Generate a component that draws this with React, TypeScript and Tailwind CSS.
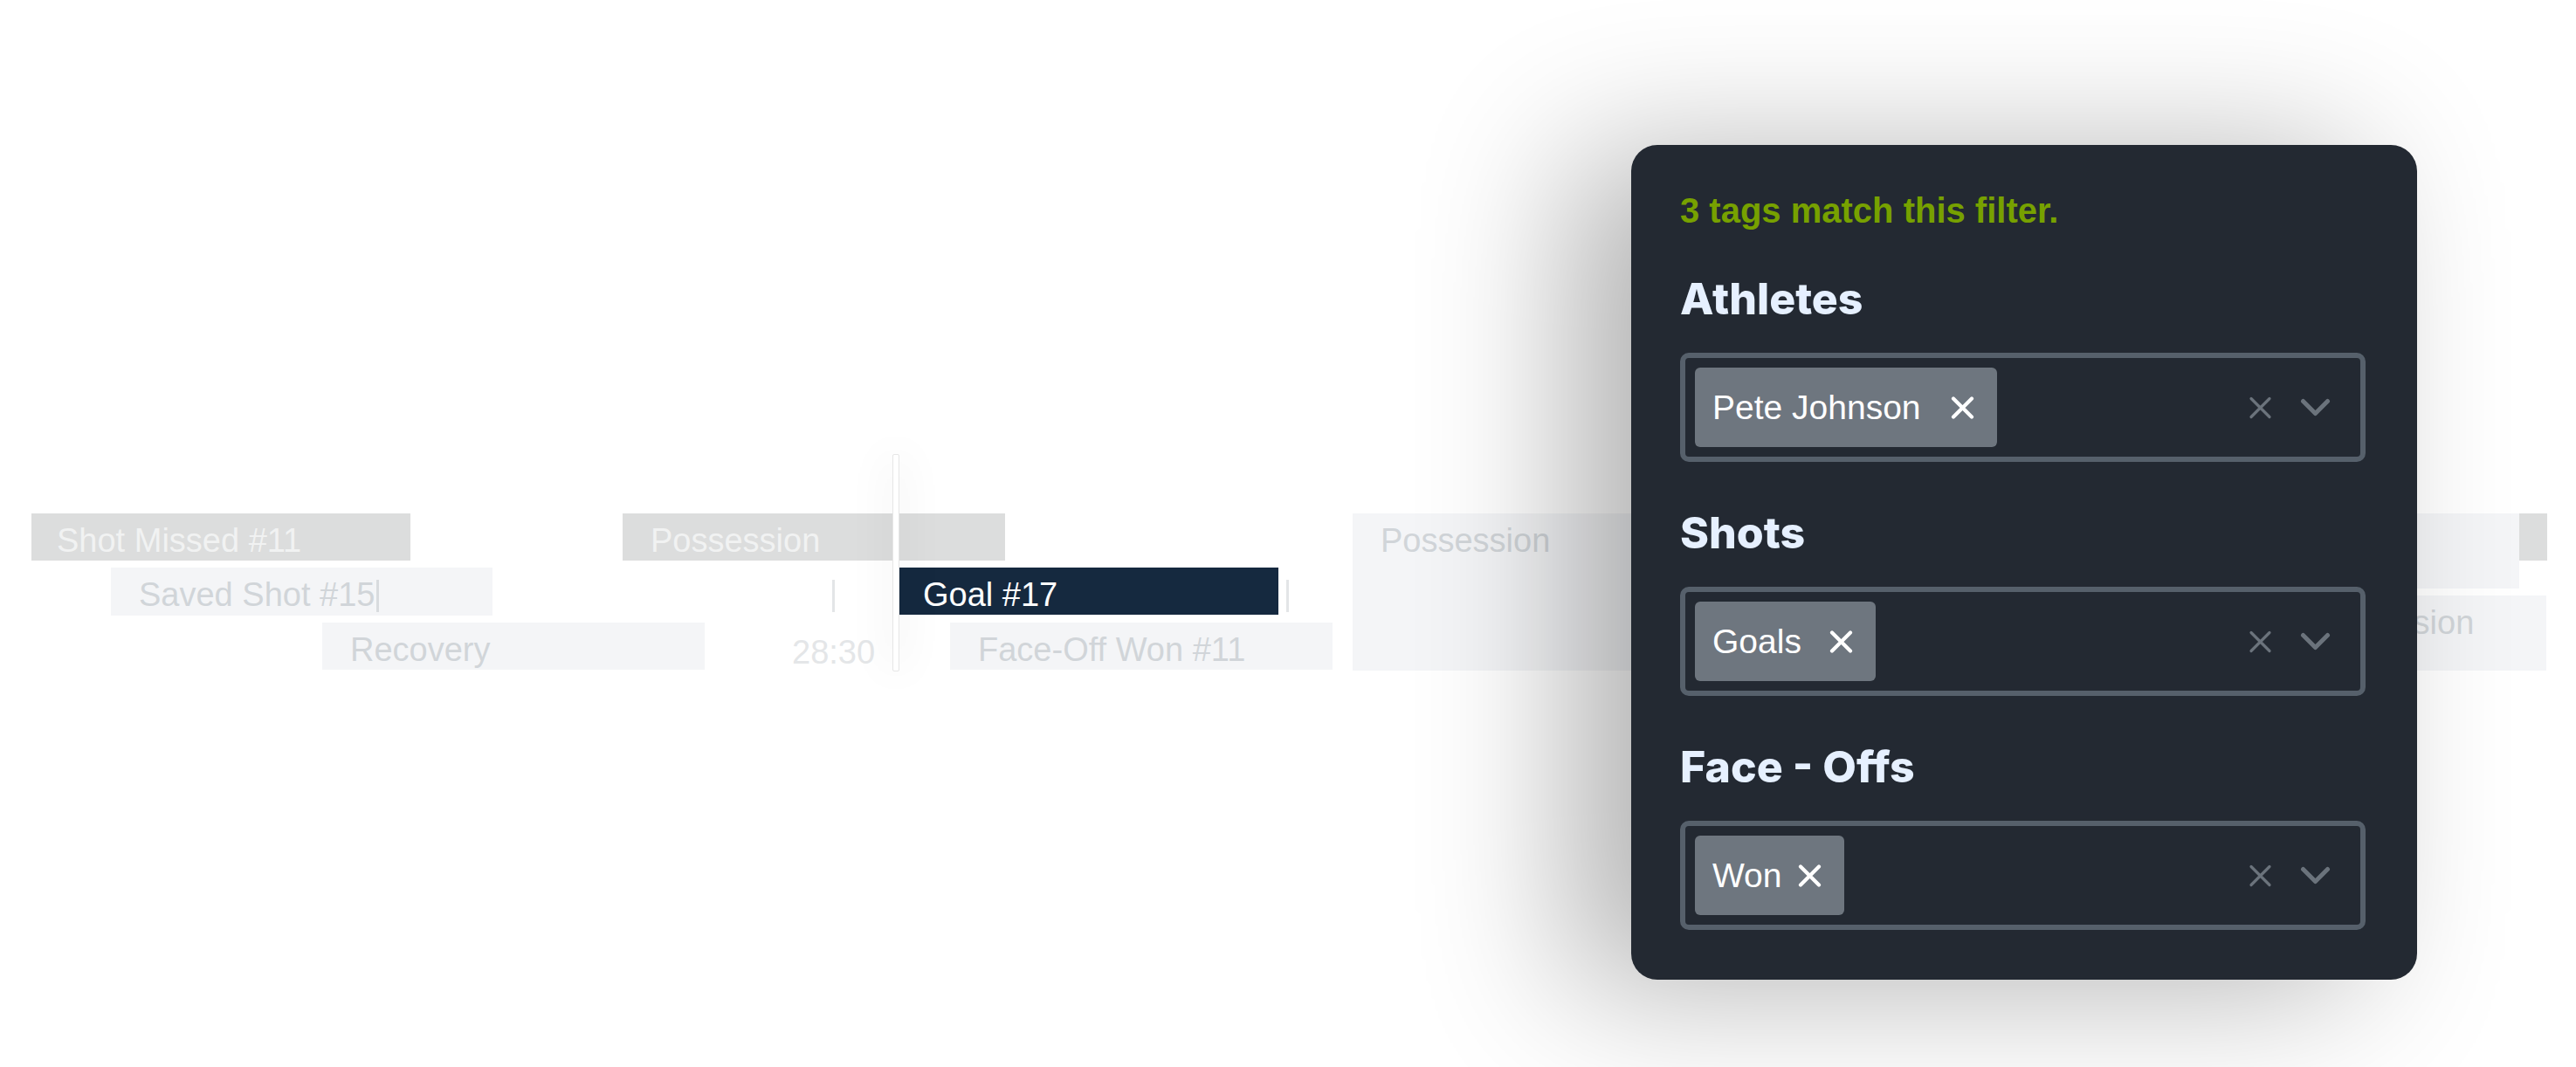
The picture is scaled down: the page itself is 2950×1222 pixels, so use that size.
type Tone = "gray" | "light" | "navy";

interface TimelineBar {
    label: string;
    left: number;
    top: number;
    width: number;
    height: number;
    tone: Tone;
    pad?: string;
    caret?: boolean;
}

const toneClass: Record<Tone, string> = {
    gray: "bg-[#dcdddd] text-[#f1f2f2]",
    light: "bg-[#f4f5f7] text-[#d1d5d9]",
    navy: "bg-[#15293f] text-white",
};

// positions are in px on the timeline, top is relative to the first track
const bars: TimelineBar[] = [
    { label: "Shot Missed #11", left: 36, top: 0, width: 434, height: 54, tone: "gray", pad: "pl-[29px]" },
    { label: "Possession", left: 713, top: 0, width: 438, height: 54, tone: "gray" },
    { label: "Possession", left: 1549, top: 0, width: 438, height: 180, tone: "light" },
    { label: "", left: 2447, top: 0, width: 438, height: 86, tone: "light" },
    { label: "", left: 2885, top: 0, width: 31, height: 54, tone: "gray" },
    { label: "Possession", left: 2607, top: 94, width: 309, height: 86, tone: "light" },
    { label: "Saved Shot #15", left: 127, top: 62, width: 437, height: 55, tone: "light", caret: true },
    { label: "Goal #17", left: 1030, top: 62, width: 434, height: 54, tone: "navy", pad: "pl-[27px]" },
    { label: "Recovery", left: 369, top: 125, width: 438, height: 54, tone: "light" },
    { label: "Face-Off Won #11", left: 1088, top: 125, width: 438, height: 54, tone: "light" },
];

const ticks = [953, 1473];

const filters = [
    { title: "Athletes", tag: "Pete Johnson", gap: "gap-[34px]" },
    { title: "Shots", tag: "Goals", gap: "gap-[32px]" },
    { title: "Face - Offs", tag: "Won", gap: "gap-[18px]" },
];

function Cross({ className, strokeWidth }: { className: string; strokeWidth: number }) {
    return (
        <svg viewBox="0 0 27 26" className={className} fill="none" stroke="currentColor" strokeWidth={strokeWidth} strokeLinecap="round">
            <path d="M3 2.5 L24 23.5 M24 2.5 L3 23.5" />
        </svg>
    );
}

function Chevron() {
    return (
        <svg viewBox="0 0 35 21" className="h-[21px] w-[35px] text-[#6b737c]" fill="none" stroke="currentColor" strokeWidth={5} strokeLinecap="round" strokeLinejoin="round">
            <path d="M3.5 3.5 L17.5 17.5 L31.5 3.5" />
        </svg>
    );
}

function Timeline() {
    return (
        <div className="relative h-[180px] w-full">
            {bars.map((bar, i) => (
                <div
                    key={i}
                    className={`absolute flex items-start pt-[9px] text-[38px] leading-[44px] whitespace-nowrap overflow-hidden ${bar.pad ?? "pl-[32px]"} ${toneClass[bar.tone]}`}
                    style={{ left: bar.left, top: bar.top, width: bar.width, height: bar.height }}
                >
                    {bar.label}
                    {bar.caret && <span className="ml-[2px] mt-[5px] h-[37px] w-[3px] bg-[#d8dbde]" />}
                </div>
            ))}
            {ticks.map((x) => (
                <div key={x} className="absolute top-[76px] h-[37px] w-[3px] bg-[#e3e5e7]" style={{ left: x }} />
            ))}
            <div className="absolute left-[907px] top-[137px] text-[38px] leading-[44px] text-[#e4e6e8]">28:30</div>
            <div className="absolute left-[1022px] top-[-68px] h-[249px] w-[8px] rounded-[2px] border border-[#e6e6e6] bg-white shadow-[0_0_50px_rgba(0,0,0,0.14)]" />
        </div>
    );
}

function FilterSelect({ tag, gap }: { tag: string; gap: string }) {
    return (
        <div className="mt-[32px] flex h-[125px] items-center rounded-[10px] border-[6px] border-[#56606b] pl-[11px] pr-[34px]">
            <div className={`flex h-[91px] items-center rounded-[6px] bg-[#6e767f] pl-[20px] pr-[26px] ${gap}`}>
                <span className="text-[39px] leading-[44px] text-white">{tag}</span>
                <Cross className="h-[26px] w-[27px] text-white" strokeWidth={4.2} />
            </div>
            <div className="flex-1" />
            <Cross className="h-[26px] w-[27px] text-[#6b737c]" strokeWidth={3.2} />
            <div className="ml-[32px]">
                <Chevron />
            </div>
        </div>
    );
}

export default function App() {
    return (
        <div className="relative h-[1222px] w-[2950px] overflow-hidden bg-white pt-[588px] font-['Liberation_Sans',Arial,sans-serif]">
            <Timeline />

            <div className="absolute left-[1868px] top-[166px] w-[900px] rounded-[30px] bg-[#232932] pb-[57px] pl-[56px] pr-[59px] pt-[52px] shadow-[-70px_10px_170px_rgba(0,0,0,0.3)]">
                <p className="text-[40px] font-bold leading-[46px] text-[#77a100]">3 tags match this filter.</p>
                {filters.map((f, i) => (
                    <div key={f.title}>
                        <h2 className={`${i === 0 ? "mt-[48px]" : "mt-[51px]"} font-['Inter',sans-serif] text-[50px] font-extrabold leading-[60px] text-[#e6f0ff]`}>
                            {f.title}
                        </h2>
                        <FilterSelect tag={f.tag} gap={f.gap} />
                    </div>
                ))}
            </div>
        </div>
    );
}
